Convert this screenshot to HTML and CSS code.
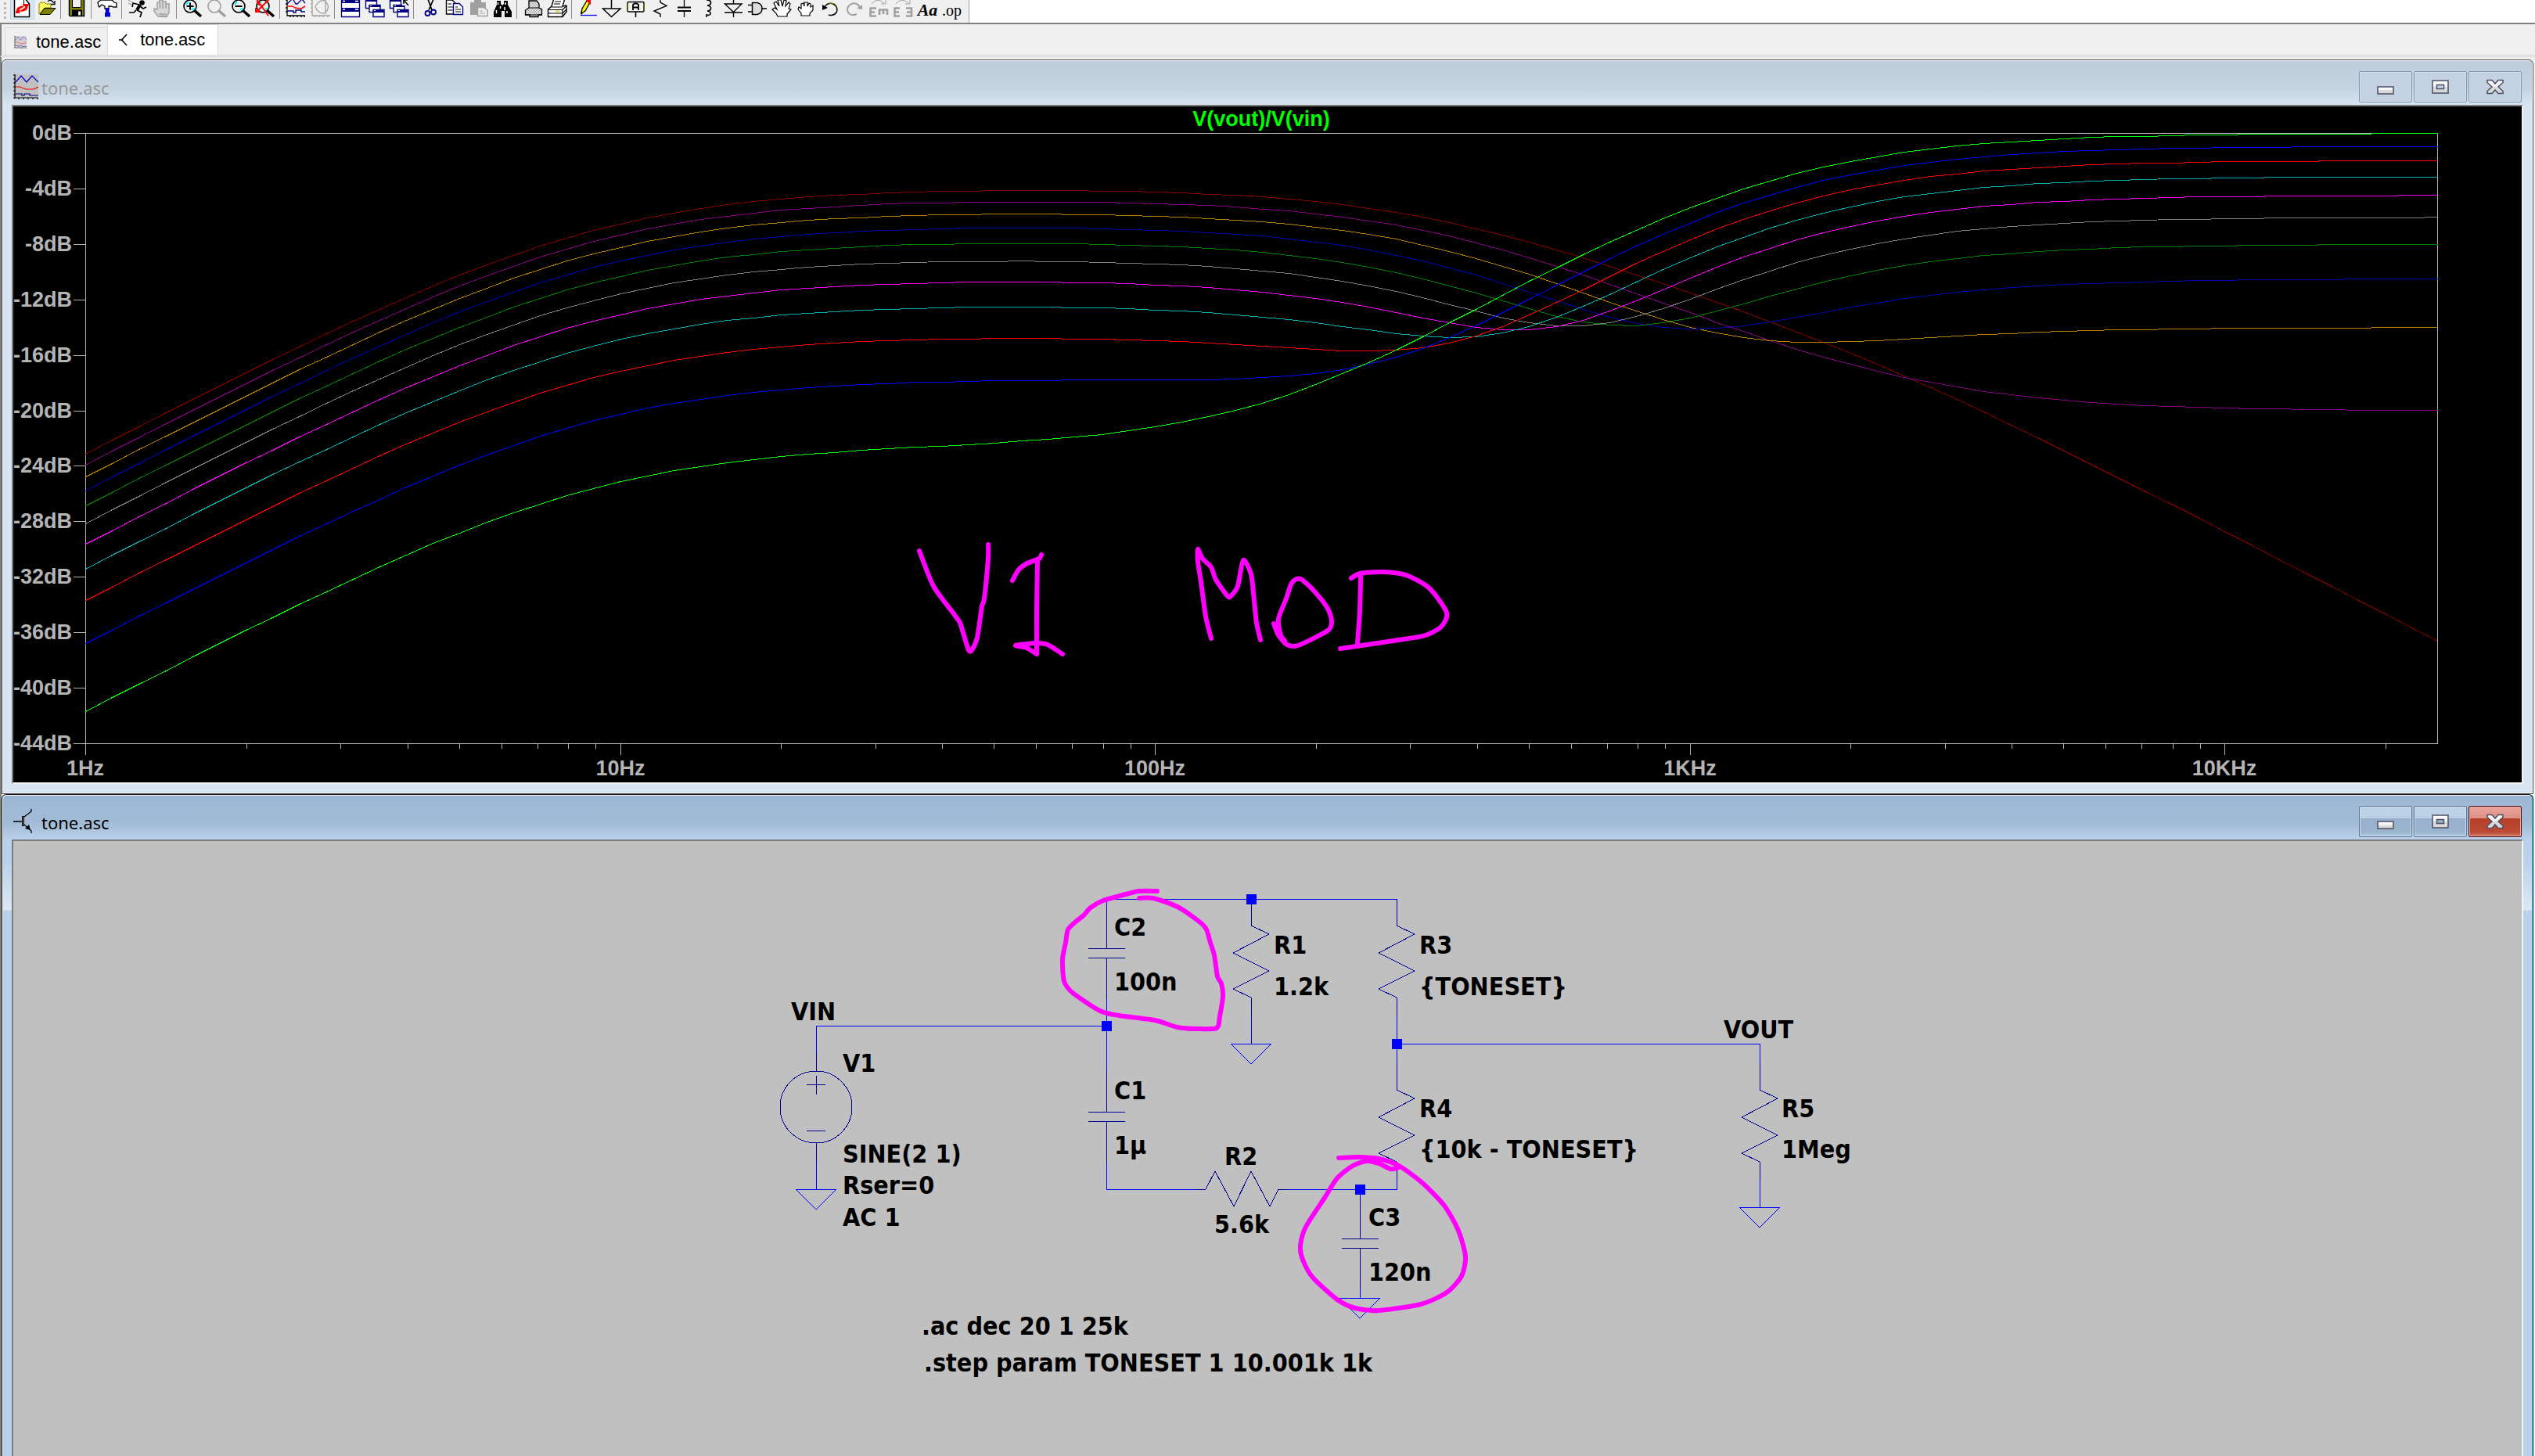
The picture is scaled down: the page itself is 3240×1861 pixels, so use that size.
FILE: index.html
```html
<!DOCTYPE html>
<html lang="en">
<head>
<meta charset="utf-8">
<title>tone.asc</title>
<link rel="stylesheet" href="styles.css">
</head>
<body>
<svg class="defs" aria-hidden="true">
  <defs>
    <linearGradient id="metal" x1="0" y1="0" x2="0" y2="1"><stop offset="0" stop-color="#fff"/><stop offset=".5" stop-color="#f0f0f0"/><stop offset=".5" stop-color="#dcdcdc"/><stop offset="1" stop-color="#d6d6d6"/></linearGradient>
    <pattern id="dither" width="2" height="2" patternUnits="userSpaceOnUse"><rect width="2" height="2" fill="#fff"/><path d="M0 0h1v1h-1zM1 1h1v1h-1z" fill="#a0a0a0"/></pattern>
    <symbol id="i-wave" viewBox="0 0 32 32"><path d="M2 0H32V30H2z" fill="#c0c0c0"/><path d="M2 0V31M0 1H3M0 6H3M0 11H3M0 16H3M0 21H3M0 26H3M0 30H32M7 30v2M13 30v2M19 30v2M25 30v2M31 30v2" stroke="#000" stroke-width="1.2" fill="none"/><path d="M3 10L10 2L17 10L24 2L32 10" stroke="#0000c8" stroke-width="1.2" fill="none"/><path d="M3 16H8L16 19H26L32 16" stroke="#f00" stroke-width="1.2" fill="none"/><path d="M3 25H11V27H14V25H21V27H32" stroke="#000080" stroke-width="1.2" fill="none"/></symbol>
    <symbol id="i-bjt" viewBox="0 0 24 32"><path d="M0 16H11M14 10L23 3V0M14 20L23 28V31" stroke="#000" fill="none" stroke-width="1.3"/><path d="M11.5 9.5h2v12h-2z" fill="#777" stroke="#000"/><path d="M22 27L15 25L20 20z"/></symbol>
    <symbol id="i-min" viewBox="0 0 66 38"><path d="M23 19h20v9h-20z" fill="url(#metal)" stroke="#4c5066" stroke-width="1.5"/></symbol>
    <symbol id="i-max" viewBox="0 0 66 38"><path fill-rule="evenodd" d="M23 11h20v16h-20zM28.500 16.500h9v5h-9z" fill="url(#metal)" stroke="#4c5066" stroke-width="1.5"/></symbol>
    <symbol id="i-close" viewBox="0 0 66 38"><path d="M23 10.500h6l4 4.500l4-4.500h6v3l-6 5.500l6 5.500v3h-6l-4-4.500l-4 4.500h-6v-3l6-5.500l-6-5.500z" fill="url(#metal)" stroke="#4c5066" stroke-width="1.5"/></symbol>
    <symbol id="i-lens" viewBox="0 0 31 25"><circle cx="12" cy="8" r="8" fill="none" stroke="currentColor" stroke-width="1.6"/><path d="M17 13L26 21" stroke="currentColor" stroke-width="3.500"/></symbol>
    <symbol id="i-casc" viewBox="0 0 31 25"><g fill="#fff" stroke="#000080" stroke-width="1.4"><path d="M3.500-3.500h14v14h-14z"/><path d="M8 6.500h14v9h-14z"/><path d="M13 12.500h14v9h-14z"/></g><path d="M3 0h14v2h-14zM8 6h14v3h-14zM13 12h14v4h-14z" fill="#000080"/><path d="M14 13.500h2M9 7.500h2" stroke="#fff"/></symbol>
  </defs>
</svg>

<header class="toolbar">
  <div class="tools" role="toolbar" aria-label="Main toolbar">
    <span class="grip"></span>
    <button class="tool hot" aria-label="New schematic"><svg viewBox="0 0 31 25"><path d="M5.500-3H18L24.500 5V21.500H5.500z" fill="#fff" stroke="#000" stroke-width="1.500"/><path d="M17.500-1V5.500H24" fill="none" stroke="#000"/><path d="M6.500 17L9 10L14 7.500L17 8L16 5L24 5L21 13L15 15L13 14L12 17z" fill="red"/><path d="M12 13L19 8.500" stroke="#fff" stroke-width="1.500"/></svg></button>
    <button class="tool" aria-label="Open"><svg viewBox="0 0 31 25"><path d="M6 18V5l2-2h5l2 2h6v5h-8z" fill="#ffff60" stroke="#808000"/><path d="M7 18.500L13 10.500H27L20 18.500z" fill="#808000" stroke="#000"/><path d="M17 2Q21-2 25 4M26 1V5.500H21" stroke="#000" fill="none" stroke-width="1.300"/></svg></button>
    <span class="sep"></span>
    <button class="tool" aria-label="Save"><svg viewBox="0 0 31 25"><path d="M5.500-3h19V20.500h-18l-1-1z" fill="#808000" stroke="#000" stroke-width="1.500"/><path d="M9.500-3h11V9.500h-11z" fill="#efefef" stroke="#000"/><path d="M9 12.500h13V20h-13z"/><path d="M17 14.500h3v5h-3z" fill="#efefef"/></svg></button>
    <span class="sep"></span>
    <button class="tool" aria-label="Control panel"><svg viewBox="0 0 31 25"><path d="M4 8L3 3L7 0H21L24 3L27 4V9H23L20 8H17V11H12V8L8 6L5 9z" fill="#fff" stroke="#000" stroke-width="1.300"/><path d="M12.500 10h5V16h1.500V21.500h-7V16h1z" fill="#0000d0"/></svg></button>
    <span class="sep"></span>
    <button class="tool" aria-label="Run"><svg viewBox="0 0 31 25"><circle cx="20.500" cy="3.500" r="3.300"/><path d="M18 6L14 13" stroke="#000" stroke-width="4"/><path d="M17 6L9 4L8 9M18 8L22 11L26 9M14 13L20 16L18 22M13 13L10 16H4" stroke="#000" stroke-width="1.700" fill="none"/><path d="M3 0L8 3M3 4L7 6" stroke="#888"/></svg></button>
    <button class="tool" aria-label="Halt" disabled><svg viewBox="0 0 31 25"><path d="M10 21L5 14V11L9 12V3h3V0h4V2h4v3h4V16L21 21.500z" fill="#d8d8d8" stroke="#a0a0a0" stroke-width="1.500"/><path d="M12.500 3V11M16 2V11M20 4V11M11 18H21M12 20.500H21" stroke="#a0a0a0" stroke-width="1.500"/></svg></button>
    <span class="sep"></span>
    <button class="tool" aria-label="Zoom in"><svg viewBox="0 0 31 25"><path d="M7 6l3-4M14 13l4-3" stroke="#0ff" stroke-width="2"/><use href="#i-lens"/><path d="M7.500 8H16.500M12 3.500V12.500" stroke="#000" stroke-width="2"/></svg></button>
    <button class="tool" aria-label="Pan" disabled><svg viewBox="0 0 31 25"><use href="#i-lens"/></svg></button>
    <button class="tool" aria-label="Zoom out"><svg viewBox="0 0 31 25"><path d="M7 6l3-4M14 13l4-3" stroke="#0ff" stroke-width="2"/><use href="#i-lens"/><path d="M7.500 8H16.500" stroke="#000" stroke-width="2"/></svg></button>
    <button class="tool" aria-label="Zoom full extents"><svg viewBox="0 0 31 25"><path d="M7 6l3-4M14 13l4-3" stroke="#0ff" stroke-width="2"/><use href="#i-lens"/><path d="M4-1L19 20M20-1L4 15M3 10V15H8M4 2L8 7" stroke="red" stroke-width="2" fill="none"/></svg></button>
    <span class="sep"></span>
    <button class="tool" aria-label="Plot"><svg viewBox="0 0 31 25"><path d="M4-1V20H27M2 0H4M2 5H4M2 10H4M2 15H4M8 20v2M12 20v2M17 20v2M22 20v2M26 20v2" stroke="#000" fill="none" stroke-width="1.300"/><path d="M4 5L11-2L15 5H17L23-1L27 4" stroke="#000080" fill="none" stroke-width="1.300"/><path d="M4 8H11L14 10L22 11L27 8" stroke="red" fill="none" stroke-width="1.500"/><path d="M4 14H12V16H15V13H22V15H27" stroke="#000080" fill="none" stroke-width="1.500"/></svg></button>
    <button class="tool" aria-label="Smith chart" disabled><svg viewBox="0 0 31 25"><path d="M5-1V20H28M3 0H5M3 5H5M3 10H5M3 15H5M9 20v2M14 20v2M19 20v2M25 20v2M22 0V18M9 9Q13-1 22 1M9 9Q13 18 22 17M22 2Q29 9 22 16" stroke="#a0a0a0" fill="none" stroke-width="1.300"/></svg></button>
    <span class="sep"></span>
    <button class="tool" aria-label="Tile"><svg viewBox="0 0 31 25"><path d="M3.500-3h23V21.500h-23z" fill="#fff" stroke="#000080" stroke-width="1.300"/><path d="M3 0h24v4h-24zM3 10h24v5h-24z" fill="#000080"/><path d="M5 1.500h3M5 12h3M21 1.500h4M21 12h4" stroke="#fff" stroke-width="1.500"/></svg></button>
    <button class="tool" aria-label="Cascade"><svg viewBox="0 0 31 25"><use href="#i-casc"/></svg></button>
    <button class="tool" aria-label="Close all"><svg viewBox="0 0 31 25"><use href="#i-casc"/><path d="M19-4h10v11h-10z" fill="#f0f0f0"/><path d="M21 5V0H26M21 0L27 7" stroke="#000" fill="none" stroke-width="1.500"/></svg></button>
    <span class="sep"></span>
    <button class="tool" aria-label="Cut"><svg viewBox="0 0 31 25"><path d="M13-1L18 13M20-1L14 13" stroke="#000" stroke-width="1.700"/><circle cx="12.500" cy="17" r="3" fill="none" stroke="#000080" stroke-width="1.800"/><circle cx="20" cy="15.500" r="3" fill="none" stroke="#000080" stroke-width="1.800"/></svg></button>
    <button class="tool" aria-label="Copy"><svg viewBox="0 0 31 25"><path d="M5.500 0H13L17 4V18H5.500z" fill="#fff" stroke="#000" stroke-width="1.400"/><path d="M7.500 5H12M7.500 9H14M7.500 13H14" stroke="#000"/><path d="M14.500 4.500H22L26.500 9V18.500H14.500z" fill="#fff" stroke="#000080" stroke-width="1.400"/><path d="M17 9H20M17 12H24M17 15H24" stroke="#000"/></svg></button>
    <button class="tool" aria-label="Paste" disabled><svg viewBox="0 0 31 25"><path d="M5 3H10V-1H19V3H25V19H5z" fill="#a0a0a0"/><path d="M14.500 9.500H22L27 13V20.500H14.500z" fill="#f0f0f0" stroke="#a0a0a0" stroke-width="1.500"/><path d="M17 14H21M17 17H24" stroke="#a0a0a0"/></svg></button>
    <button class="tool" aria-label="Find"><svg viewBox="0 0 31 25"><path d="M8 1h5v4l2 2l2-2V1h5v5l5 9v7h-9v-8h-4v8H4v-7l4-9z"/><path d="M9.500 3v3M19 3v3M7.500 13v4M12.500 8v3M18 9v4M21 14v3" stroke="#fff" stroke-width="1.500"/></svg></button>
    <span class="sep"></span>
    <button class="tool" aria-label="Print preview"><svg viewBox="0 0 31 25"><path d="M10 10V1H20L23 5V10L26.500 12V19H22V21.500H11V19H5.500V13z" fill="url(#dither)" stroke="#000" stroke-width="1.300"/><path d="M6 19H26M10 10H23" stroke="#000"/></svg></button>
    <button class="tool" aria-label="Print"><svg viewBox="0 0 31 25"><path d="M3.500 12L8 8L11-2H25L22 8L27 7V15L22 21.500H3.500z" fill="#fff" stroke="#000" stroke-width="1.400"/><path d="M12 2H20M11 5H19M8 9H22M3.500 12.500H22L27 7.500M22 12V21M4 17H22L27 12" stroke="#000" stroke-width="1.200" fill="none"/><path d="M13 14.500h5" stroke="#cc0" stroke-width="1.500"/></svg></button>
    <span class="sep"></span>
    <button class="tool" aria-label="Draw wire"><svg viewBox="0 0 31 25"><path d="M7 17L8 11L14 1L18 3L12 14z" fill="#ff0" stroke="#000" stroke-width="1.300"/><path d="M14 0h4v4z" fill="red" stroke="red" stroke-width="2"/><path d="M6.500 19V14L9 17z"/><path d="M6 19.500H27" stroke="#00f" stroke-width="1.300"/></svg></button>
    <button class="tool" aria-label="Ground"><svg viewBox="0 0 31 25"><path d="M14.500-1V11M3.500 11H26L14.500 21.500z" fill="none" stroke="#000" stroke-width="1.500"/></svg></button>
    <button class="tool" aria-label="Label net"><svg viewBox="0 0 31 25"><rect x="4" y="2.500" width="21" height="12.500" rx="1.500" fill="#f0f0f0" stroke="#000" stroke-width="1.600"/><path d="M4 4V14M25 4V14" stroke="#808000"/><path d="M11 13V6L13 4.500H16L18 6V13M11 9.500H18" fill="none" stroke="#000" stroke-width="1.800"/><path d="M14.500 15V22" stroke="#000" stroke-width="1.600"/></svg></button>
    <button class="tool" aria-label="Resistor"><svg viewBox="0 0 31 25"><path d="M15-1V3L23 7.500L7 14L15 18V22" fill="none" stroke="#000" stroke-width="1.400"/></svg></button>
    <button class="tool" aria-label="Capacitor"><svg viewBox="0 0 31 25"><path d="M14.500-1V9M14.500 15V22" stroke="#000" stroke-width="1.300"/><path d="M6 9.500H23M6 14H23" stroke="#000" stroke-width="2"/></svg></button>
    <button class="tool" aria-label="Inductor"><svg viewBox="0 0 31 25"><path d="M12 0Q18 0 17.500 4Q17 7 13 7Q18 8 17.500 11Q17 14 13 14Q18 15 17 18Q16 20 12 19V22" fill="none" stroke="#000" stroke-width="1.600"/></svg></button>
    <button class="tool" aria-label="Diode"><svg viewBox="0 0 31 25"><path d="M15.500-1V5M4.500 5H26L15.500 15.500zM4 16H27M15.500 16V22" fill="none" stroke="#000" stroke-width="1.400"/></svg></button>
    <button class="tool" aria-label="Component"><svg viewBox="0 0 31 25"><path d="M8.500 3.500H15Q21 5 21 11Q21 17 15 18.500H8.500z" fill="#ddd" stroke="#000" stroke-width="1.500"/><path d="M3 6.500H8M3 15H8M21 11H27" stroke="#000" stroke-width="1.500"/></svg></button>
    <button class="tool" aria-label="Move"><svg viewBox="0 0 31 25"><path d="M10 21L8 17L3 12L6 10L9 12L5 4L8 2L12 8L10 0H14L16 8L18 0L21 1L20 8L24 3L26 5L24 11L27 12L22 18V21z" fill="#fff" stroke="#000" stroke-width="1.200"/></svg></button>
    <button class="tool" aria-label="Drag"><svg viewBox="0 0 31 25"><path d="M9 20V17L5 12L6 9L9 11V5L12 4L13 8V3H17V8L19 4L21 5V9L24 7V13L20 17V20z" fill="#fff" stroke="#000" stroke-width="1.200"/></svg></button>
    <button class="tool" aria-label="Undo"><svg viewBox="0 0 31 25"><path d="M7 11Q11 2 19 5Q26 9 23 16Q19 21 13 19" fill="none" stroke="#000" stroke-width="1.500"/><path d="M13 5Q22 2 24 10" fill="none" stroke="#808000"/><path d="M5 6V13L12 10z"/></svg></button>
    <button class="tool" aria-label="Redo" disabled><svg viewBox="0 0 31 25"><path d="M23 11Q19 2 11 5Q4 9 7 16Q11 21 18 18" fill="none" stroke="#a0a0a0" stroke-width="2"/><path d="M25 6V12L18 11z" fill="#a0a0a0"/></svg></button>
    <button class="tool" aria-label="Rotate" disabled><svg viewBox="0 0 31 25"><path d="M12 10.500H4.500V20.500H12M4.500 15.500H10M15 12.500H27M16 12V19M21 12V18M26 12V19" fill="none" stroke="#a0a0a0" stroke-width="2.600"/><path d="M6 5Q13-4 22 4M24 0V5H18" fill="none" stroke="#a0a0a0"/></svg></button>
    <button class="tool" aria-label="Mirror" disabled><svg viewBox="0 0 31 25"><path d="M11 10.500H4.500V20.500H11M4.500 15.500H10M19 10.500H26V20.500H19M26 15.500H20" fill="none" stroke="#a0a0a0" stroke-width="2.600"/><path d="M6 5Q13-4 22 4M24 0V5H18" fill="none" stroke="#a0a0a0"/></svg></button>
    <button class="tool text-tool italic">Aa</button>
    <button class="tool text-tool">.op</button>
  </div>
</header>

<nav class="tabs" aria-label="Open documents">
  <a class="tab" href="#plot"><svg class="tab-icon faded" viewBox="0 0 32 32"><use href="#i-wave"/></svg>tone.asc</a>
  <a class="tab active" href="#schematic" aria-current="page"><svg class="tab-icon" viewBox="0 0 16 16"><path d="M2 8H6M6 7.500L12 1M6 8.500L12 15M6.500 6V10" stroke="#000" stroke-width="1.500" fill="none"/></svg>tone.asc</a>
</nav>

<main class="workspace">
  <section class="window" id="plot">
    <div class="titlebar">
      <svg class="title-icon" viewBox="0 0 32 32"><use href="#i-wave"/></svg>
      <h2 class="title">tone.asc</h2>
      <button class="win-btn" aria-label="Minimize"><svg viewBox="0 0 66 38"><use href="#i-min"/></svg></button>
      <button class="win-btn" aria-label="Maximize"><svg viewBox="0 0 66 38"><use href="#i-max"/></svg></button>
      <button class="win-btn" aria-label="Close"><svg viewBox="0 0 66 38"><use href="#i-close"/></svg></button>
    </div>
    <div class="pane dark">
      <svg class="canvas" viewBox="17 136 3206 864" role="img" aria-label="Frequency response of V(vout)/V(vin)">
        <g id="axes" class="axes"></g>
        <g id="traces" class="traces"></g>
        <text class="trace-name" x="1612" y="161">V(vout)/V(vin)</text>
        <g class="ink">
          <path data-pts="1175,704 1193,749 1220,786 1227,796 1231,809 1238,831 1242,831 1249,815 1255,775 1258,765 1263,713 1263,696"/>
          <path data-pts="1294,742 1302,728 1313,720 1328,714 1331,709"/>
          <path data-pts="1313,720 1328,714"/>
          <path data-pts="1326,718 1325,780 1325,836"/>
          <path data-pts="1325,836 1312,828 1298,825 1325,822 1339,824 1358,836"/>
          <path data-pts="1548,816 1541,788 1535,744 1531,718 1531,702 1537,714 1548,725 1554,741 1569,762 1573,762 1582,749 1589,716 1599,734 1603,768 1606,796 1611,818"/>
          <path data-pts="1628,797 1634,812 1645,824 1659,825 1697,806 1702,794 1697,778 1681,757 1664,741 1657,740 1650,747 1644,765 1634,791 1637,812 1642,819"/>
          <path data-pts="1727,739 1738,733 1766,731 1797,735 1827,752 1849,783 1842,801 1822,812 1794,817 1713,829"/>
          <path data-pts="1739,735 1738,780 1735,822"/>
        </g>
      </svg>
    </div>
  </section>

  <section class="window focused" id="schematic">
    <div class="titlebar">
      <svg class="title-icon" viewBox="0 0 32 32"><use href="#i-bjt" width="24" height="32"/></svg>
      <h2 class="title">tone.asc</h2>
      <button class="win-btn" aria-label="Minimize"><svg viewBox="0 0 66 38"><use href="#i-min"/></svg></button>
      <button class="win-btn" aria-label="Maximize"><svg viewBox="0 0 66 38"><use href="#i-max"/></svg></button>
      <button class="win-btn close" aria-label="Close"><svg viewBox="0 0 66 38"><use href="#i-close"/></svg></button>
    </div>
    <div class="pane">
      <svg class="canvas" viewBox="17 1075 3206 786" role="img" aria-label="Tone control schematic">
        <defs>
          <path id="res" d="M0-23V11L23 22L-23 46L23 69L-23 92L0 103V126"/>
          <path id="cap" d="M0-23V29M0 41V93M-23 29H24M-23 41H24"/>
          <path id="gnd" d="M-26 0H26L0 26z"/>
        </defs>
        <g class="wires">
          <path d="M1414 1190V1149H1785V1172M1599 1149V1172M1043 1346V1311H1414M1414 1260V1380M1785 1290V1370M1785 1334H2249V1370M1414 1470V1520H1530M1640 1520H1785V1490M1738 1520V1560M1738 1640V1659M1599 1290V1334M2249 1490V1543M1043 1470V1520"/>
          <use href="#gnd" x="1599" y="1334"/><use href="#gnd" x="2249" y="1543"/><use href="#gnd" x="1043" y="1520"/><use href="#gnd" x="1738" y="1659"/>
        </g>
        <g class="parts">
          <use href="#res" x="1599" y="1172"/><use href="#res" x="1785" y="1172"/><use href="#res" x="1785" y="1382"/><use href="#res" x="2249" y="1382"/>
          <use href="#cap" x="1414" y="1183"/><use href="#cap" x="1414" y="1392"/><use href="#cap" x="1738" y="1554"/>
          <path d="M1530 1520H1541L1553 1497L1577 1542L1599 1497L1623 1542L1634 1520H1646"/>
          <circle cx="1043" cy="1415" r="46"/><path d="M1043 1346V1369M1043 1461V1484M1031 1386H1055M1043 1375V1399M1031 1445H1055"/>
        </g>
        <g class="nodes"><path d="M1408 1305h13v13h-13zM1593 1143h13v13h-13zM1779 1328h13v13h-13zM1732 1514h13v13h-13z"/></g>
        <g class="labels">
          <text x="1011" y="1304">VIN</text><text x="1077" y="1370">V1</text><text x="1077" y="1486">SINE(2 1)</text><text x="1077" y="1526">Rser=0</text><text x="1077" y="1567">AC 1</text>
          <text x="1424" y="1196">C2</text><text x="1424" y="1266">100n</text><text x="1424" y="1405">C1</text><text x="1424" y="1475">1µ</text>
          <text x="1628" y="1219">R1</text><text x="1628" y="1272">1.2k</text><text x="1814" y="1219">R3</text><text x="1814" y="1272">{TONESET}</text>
          <text x="1814" y="1428">R4</text><text x="1814" y="1480">{10k - TONESET}</text><text x="1565" y="1489">R2</text><text x="1552" y="1576">5.6k</text>
          <text x="1749" y="1567">C3</text><text x="1749" y="1637">120n</text><text x="2203" y="1327">VOUT</text><text x="2277" y="1428">R5</text><text x="2277" y="1480">1Meg</text>
          <text x="1178" y="1706">.ac dec 20 1 25k</text><text x="1181" y="1753">.step param TONESET 1 10.001k 1k</text>
        </g>
        <g class="ink">
          <path data-pts="1479,1139 1456,1139 1439,1143 1410,1151 1394,1160 1385,1170 1375,1178 1365,1188 1362,1205 1358,1226 1360,1254 1371,1269 1406,1292 1430,1298 1476,1304 1505,1313 1529,1315 1555,1314 1559,1299 1563,1273 1561,1257 1556,1248 1552,1221 1547,1205 1542,1188 1534,1179 1505,1159 1474,1148 1456,1148"/>
          <path data-pts="1711,1480 1737,1479 1762,1481 1788,1490 1818,1512 1846,1541 1864,1573 1873,1606 1868,1631 1849,1652 1816,1667 1762,1675 1732,1672 1709,1661 1678,1633 1665,1610 1662,1592 1669,1568 1693,1531 1709,1506 1729,1490 1747,1484 1762,1487 1777,1494 1786,1493"/>
        </g>
      </svg>
    </div>
  </section>
</main>
<script src="plot.js"></script>
</body>
</html>
```
FILE: styles.css
```css
* { box-sizing: border-box; }

html { background: #f0f0f0; }

body {
  margin: 0;
  min-height: 100vh;
  display: flex;
  flex-direction: column;
  overflow-x: hidden;
  font-family: "Liberation Sans", Arial, sans-serif;
  color: #000;
}

.defs { position: absolute; width: 0; height: 0; }

button {
  margin: 0;
  padding: 0;
  border: 0;
  background: none;
  font: inherit;
  color: inherit;
}

/* Toolbar */

.toolbar {
  height: 31px;
  background: #fff;
  border-bottom: 2px solid #808080;
  overflow: hidden;
}

.tools {
  display: flex;
  align-items: flex-start;
  width: max-content;
  height: 29px;
  padding-right: 6px;
  background: #f0f0f0;
  border-right: 1px solid #a0a0a0;
}

.grip {
  width: 3px;
  height: 26px;
  margin: 0 5px;
  background: repeating-linear-gradient(#f0f0f0 0 3px, #b8b8b8 3px 6px);
}

.tool { width: 31px; height: 25px; overflow: hidden; }
.tool:disabled { color: #a0a0a0; }
.tool svg { display: block; width: 31px; height: 25px; }
.hot { background: #d8e6f2; box-shadow: inset 0 -1px #b8d6ee, inset 1px 0 #b8d6ee, inset -1px 0 #b8d6ee; }

.sep {
  width: 1px;
  height: 24px;
  margin: 0 5px 0 2px;
  background: #8c8c8c;
}

.text-tool {
  font-family: "Liberation Serif", "Times New Roman", serif;
  font-size: 20px;
  line-height: 22px;
}
.text-tool.italic { font-weight: bold; font-style: italic; font-size: 22px; line-height: 24px; }

/* Document tabs */

.tabs {
  display: flex;
  align-items: flex-end;
  height: 42px;
  padding-left: 4px;
  border-left: 2px solid #808080;
  border-bottom: 3px double #d9d9d9;
}

.tab {
  display: flex;
  align-items: center;
  gap: 12px;
  height: 35px;
  padding: 2px 8px 0 11px;
  border: 1px solid #d9d9d9;
  border-width: 1px 0 0 1px;
  font-size: 22px;
  line-height: 26px;
  color: #000;
  text-decoration: none;
}

.tab.active {
  height: 39px;
  padding: 0 16px 0 12px;
  gap: 13px;
  background: #fff;
  border-right-width: 1px;
}

.tab-icon { width: 16px; height: 16px; }
.tab-icon.faded { opacity: .7; }

/* MDI windows */

.workspace {
  flex: 1;
  display: flex;
  flex-direction: column;
  padding: 3px 2px 0 0;
  border-left: 2px solid #808080;
}

.window {
  display: flex;
  flex-direction: column;
  padding: 0 12px 12px;
  border: 1px solid #4a4a4a;
  border-radius: 6px 6px 0 0;
  background: linear-gradient(#bfcddb, #c5d3e0 36px, #d7e4f2 57px);
  box-shadow: inset 1px 1px #f4f8fc, inset -1px -1px #f4f8fc;
}

.window.focused {
  flex: 1;
  padding-bottom: 0;
  border-color: #1a1a1a;
  border-bottom: 0;
  background: linear-gradient(#99b3d1, #9fb9d6 12px, #a2bbd6 36px, #b9d1ea 57px, #b9d1ea 84px, #dce8f5 147px, #b9d1ea 148px);
  box-shadow: inset 1px 1px #f4f8fc, inset -1px 0 #30c8f0;
}

.titlebar {
  display: flex;
  align-items: flex-start;
  gap: 2px;
  height: 57px;
  padding: 14px 2px 0;
}

.title-icon { width: 32px; height: 32px; margin-top: 4px; }

.title {
  flex: 1;
  margin: 6px 0 0 2px;
  font-family: "Noto Sans", "Open Sans", sans-serif;
  font-size: 22px;
  line-height: 30px;
  font-weight: 400;
  color: #999;
}
.focused .title { color: #000; }

.win-btn {
  width: 68px;
  height: 40px;
  border: 1px solid #8494ae;
  border-radius: 2px;
  background: #c3d1e1;
  box-shadow: inset 0 0 0 1px #d3dfeb;
}
.win-btn svg { display: block; width: 66px; height: 38px; }

.focused .win-btn {
  border-color: #63748e;
  background: linear-gradient(#c0d4e9, #bad0e6 40%, #98b0cc 40%, #9ab4ce 85%, #b0cbe4);
  box-shadow: inset 0 0 0 1px #ccdcee;
}
.focused .win-btn.close {
  border-color: #4a1018;
  background: linear-gradient(#e8a69c, #dd8f84 40%, #b5402a 40%, #bc4a34 85%, #d07864);
  box-shadow: inset 0 0 0 1px #e5a89e;
}

.pane {
  flex: 1;
  border: 2px solid;
  border-color: #7c7c7c #f4f4f4 #f4f4f4 #7c7c7c;
  background: #c0c0c0;
}
.focused .pane { border-bottom: 0; }
.pane.dark { background: #000; }

.canvas { display: block; width: 100%; height: auto; }

/* Waveform plot */

.axes { stroke: #b4b4b4; fill: none; shape-rendering: crispEdges; }
.axes text { stroke: none; fill: #b4b4b4; font-size: 27px; font-weight: bold; text-anchor: middle; }
.axes .level { text-anchor: end; }
.traces { fill: none; stroke-width: 1; shape-rendering: crispEdges; }
.trace-name { fill: #0f0; font-size: 27px; font-weight: bold; text-anchor: middle; }

/* Schematic */

.wires { stroke: #00f; fill: none; shape-rendering: crispEdges; }
.parts { stroke: #000090; fill: none; shape-rendering: crispEdges; }
.nodes { fill: #00f; }
.labels { font-family: "DejaVu Sans Condensed", "DejaVu Sans", sans-serif; font-size: 32px; font-weight: bold; }

/* Pen markup */

.ink { fill: none; stroke: #f0f; stroke-width: 6; stroke-linecap: round; stroke-linejoin: round; }
```
FILE: plot.js
```js
// Draws the AC sweep of the tone network and the pen strokes.
const NS = "http://www.w3.org/2000/svg";
const X0 = 109, X1 = 3115, Y0 = 170, Y1 = 950;
const DECADE = (X1 - X0) / Math.log10(25000);
const DB = (Y1 - Y0) / 44;
const COLORS = ["#00ff00", "#0000ff", "#ff0000", "#00b4b4", "#ff00ff", "#808080",
  "#008000", "#0000b0", "#b48200", "#800080", "#800000"];

function add(parent, name, attrs, text) {
  const el = document.createElementNS(NS, name);
  for (const key in attrs) el.setAttribute(key, attrs[key]);
  if (text) el.textContent = text;
  parent.appendChild(el);
}

const cadd = (a, b) => [a[0] + b[0], a[1] + b[1]];
const csub = (a, b) => [a[0] - b[0], a[1] - b[1]];
const cmul = (a, b) => [a[0] * b[0] - a[1] * b[1], a[0] * b[1] + a[1] * b[0]];
function cdiv(a, b) {
  const d = b[0] * b[0] + b[1] * b[1];
  return [(a[0] * b[0] + a[1] * b[1]) / d, (a[1] * b[0] - a[0] * b[1]) / d];
}

// Gaussian elimination with partial pivoting on complex rows [A | b].
function solve(m) {
  const n = m.length;
  for (let i = 0; i < n; i++) {
    let p = i;
    for (let r = i + 1; r < n; r++) if (Math.hypot(...m[r][i]) > Math.hypot(...m[p][i])) p = r;
    [m[i], m[p]] = [m[p], m[i]];
    for (let r = 0; r < n; r++) {
      if (r === i) continue;
      const k = cdiv(m[r][i], m[i][i]);
      for (let c = i; c <= n; c++) m[r][c] = csub(m[r][c], cmul(k, m[i][c]));
    }
  }
  return m.map((row, i) => cdiv(row[n], row[i]));
}

// Nodes: 0 top, 1 vout, 2 bottom, 3 C1-R2.
function gain(f, t) {
  const w = 2 * Math.PI * f;
  const m = Array.from({ length: 4 }, () => Array.from({ length: 5 }, () => [0, 0]));
  const link = (a, b, y) => {
    m[a][a] = cadd(m[a][a], y);
    m[b][b] = cadd(m[b][b], y);
    m[a][b] = csub(m[a][b], y);
    m[b][a] = csub(m[b][a], y);
  };
  const toGround = (a, y) => { m[a][a] = cadd(m[a][a], y); };
  const toInput = (a, y) => { toGround(a, y); m[a][4] = cadd(m[a][4], y); };
  toInput(0, [0, w * 100e-9]);
  toInput(3, [0, w * 1e-6]);
  toGround(0, [1 / 1200, 0]);
  link(0, 1, [1 / t, 0]);
  link(1, 2, [1 / (10000 - t), 0]);
  toGround(1, [1e-6, 0]);
  toGround(2, [0, w * 120e-9]);
  link(3, 2, [1 / 5600, 0]);
  return 20 * Math.log10(Math.hypot(...solve(m)[1]));
}

const axes = document.getElementById("axes");
let grid = `M94 ${Y0 + .5}H${X1 + .5}V${Y1 + .5}M94 ${Y1 + .5}H${X1}M${X0 + .5} ${Y0}V${Y1 + 15}`;
for (let db = 0; db <= 44; db += 4) {
  const y = Math.round(Y0 + db * DB);
  grid += `M94 ${y + .5}H${X0}`;
  add(axes, "text", { class: "level", x: 92, y: y + 9 }, (db ? "-" + db : "0") + "dB");
}
for (let d = 0; d < 5; d++) {
  for (let k = 1; k < 10; k++) {
    const x = Math.round(X0 + DECADE * (d + Math.log10(k)));
    if (x < X1) grid += `M${x + .5} ${Y1}V${Y1 + (k === 1 ? 15 : 7)}`;
  }
  add(axes, "text", { x: Math.round(X0 + DECADE * d), y: 991 }, ["1Hz", "10Hz", "100Hz", "1KHz", "10KHz"][d]);
}
add(axes, "path", { d: grid });

// Sample points snap to pixel centres so flat parts stay one pixel thick.
const traces = document.getElementById("traces");
for (let s = COLORS.length - 1; s >= 0; s--) {
  const pts = [];
  for (let i = 0; i <= 88; i++) {
    const lf = Math.min(i / 20, Math.log10(25000));
    const x = Math.round(X0 + DECADE * lf) + .5;
    const y = Math.round(Y0 - gain(10 ** lf, 1 + 1000 * s) * DB) + .5;
    pts.push(`${x},${y}`);
  }
  add(traces, "polyline", { points: pts.join(" "), stroke: COLORS[s] });
}

// Pen strokes are smoothed through their sample points.
for (const stroke of document.querySelectorAll(".ink path")) {
  const p = stroke.dataset.pts.split(" ").map(s => s.split(",").map(Number));
  let d = `M${p[0]}`;
  for (let i = 0; i < p.length - 1; i++) {
    const a = p[i - 1] || p[i], b = p[i], c = p[i + 1], e = p[i + 2] || c;
    d += `C${b[0] + (c[0] - a[0]) / 8} ${b[1] + (c[1] - a[1]) / 8} ${c[0] - (e[0] - b[0]) / 8} ${c[1] - (e[1] - b[1]) / 8} ${c}`;
  }
  stroke.setAttribute("d", d);
}
```
